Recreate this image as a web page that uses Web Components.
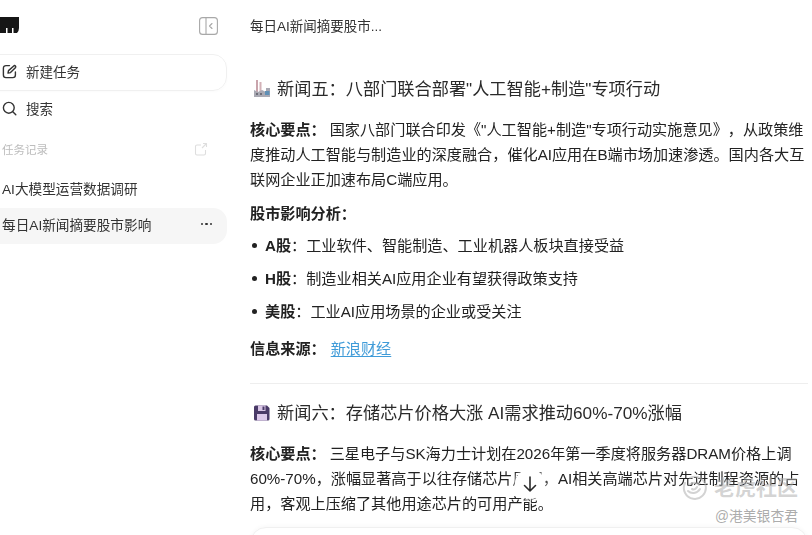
<!DOCTYPE html>
<html lang="zh">
<head>
<meta charset="utf-8">
<title>每日AI新闻摘要股市影响</title>
<style>
  html, body { margin:0; height:100%; overflow:hidden; background:#fff; }
  body { font-family:"Liberation Sans","Noto Sans CJK SC",sans-serif; color:#222; text-spacing-trim:space-all; }
</style>
</head>
<body>
<app-shell>
  <app-sidebar slot="side">
    <nav-row boxed label="新建任务">
      <svg slot="icon" width="15" height="15" viewBox="0 0 15 15" fill="none" stroke="#333" stroke-width="1.400" stroke-linecap="round" stroke-linejoin="round"><path d="M7.500 1.600H4a2.600 2.600 0 0 0-2.600 2.600V11A2.600 2.600 0 0 0 4 13.600h6.800a2.600 2.600 0 0 0 2.600-2.600V8"/><path d="M12.300 1.500a1.300 1.300 0 0 1 1.300 1.900L8.500 8.600 6 9.100l.5-2.500z"/></svg>
    </nav-row>
    <nav-row label="搜索">
      <svg slot="icon" width="15" height="15" viewBox="0 0 15 15" fill="none" stroke="#333" stroke-width="1.400" stroke-linecap="round"><circle cx="6.800" cy="6.800" r="5.400"/><path d="M10.800 10.800l3 3"/></svg>
    </nav-row>
    <history-head></history-head>
    <history-item>AI大模型运营数据调研</history-item>
    <history-item active>每日AI新闻摘要股市影响</history-item>
  </app-sidebar>
  <chat-view slot="main" title-text="每日AI新闻摘要股市...">
    <news-section>
      <svg slot="emoji" width="18" height="18" viewBox="0 0 18 18"><rect x="3" y="0" width="2" height="13" fill="#c9a4ac"/><rect x="6.500" y="2" width="2" height="11" fill="#d3b2b8"/><path d="M1 17V10l4 2 4-2 4 2V8h4v9z" fill="#a9a9b3"/><rect x="12" y="11" width="4.500" height="4" fill="#5f8fb5"/><rect x="3" y="13" width="2" height="2" fill="#6d6d78"/><rect x="7" y="13" width="2" height="2" fill="#6d6d78"/></svg>
      <span slot="title">新闻五：八部门联合部署"人工智能+制造"专项行动</span>
      <news-para label="核心要点：">国家八部门联合印发《"人工智能+制造"专项行动实施意见》，从政策维度推动人工智能与制造业的深度融合，催化AI应用在B端市场加速渗透。国内各大互联网企业正加速布局C端应用。</news-para>
      <impact-list heading="股市影响分析：">
        <impact-item market="A股">工业软件、智能制造、工业机器人板块直接受益</impact-item>
        <impact-item market="H股">制造业相关AI应用企业有望获得政策支持</impact-item>
        <impact-item market="美股">工业AI应用场景的企业或受关注</impact-item>
      </impact-list>
      <source-line name="新浪财经"></source-line>
    </news-section>
    <news-section ruled>
      <svg slot="emoji" width="18" height="18" viewBox="0 0 18 18"><path d="M2.500 1.500h11.500l2.500 2.500v11a1.500 1.500 0 0 1-1.500 1.500h-12.500a1.500 1.500 0 0 1-1.500-1.500v-12a1.500 1.500 0 0 1 1.500-1.500z" fill="#4a3a68"/><rect x="4" y="10" width="10" height="6.500" fill="#dcc8ea"/><rect x="5" y="1.500" width="7.500" height="5.500" fill="#d9c6e6"/><rect x="9.500" y="2.500" width="2" height="3.500" fill="#4a3a68"/></svg>
      <span slot="title">新闻六：存储芯片价格大涨 AI需求推动60%-70%涨幅</span>
      <news-para label="核心要点：">三星电子与SK海力士计划在2026年第一季度将服务器DRAM价格上调60%-70%，涨幅显著高于以往存储芯片周期，AI相关高端芯片对先进制程资源的占用，客观上压缩了其他用途芯片的可用产能。</news-para>
    </news-section>
    <composer-box></composer-box>
  </chat-view>
</app-shell>
<scroll-down></scroll-down>
<site-watermark></site-watermark>

<script>
// ===== SHELL =====
customElements.define('app-shell', class extends HTMLElement {
    connectedCallback() {
        this.attachShadow({ mode: 'open' });
        this.shadowRoot.innerHTML = `
            <style>
                :host { display:grid; grid-template-columns:250px 1fr; height:535px; overflow:hidden; filter:blur(.3px); }
            </style>
            <slot name="side"></slot>
            <slot name="main"></slot>
        `;
    }
});

// ===== SIDEBAR =====
customElements.define('app-sidebar', class extends HTMLElement {
    connectedCallback() {
        this.attachShadow({ mode: 'open' });
        this.shadowRoot.innerHTML = `
            <style>
                :host { display:block; margin-left:-14px; width:241px; padding-top:17px; }
                .top { display:flex; justify-content:space-between; align-items:flex-start; height:18px; margin-bottom:19px; padding-left:14px; padding-right:9px; }
                .top svg { display:block; }
            </style>
            <div class="top">
                <svg width="19" height="17" viewBox="0 0 19 17"><path d="M0 0h19v11q0 3-2 5h-3.500v-5H12v5H7.500v-5H6v5H0z" fill="#161616"/></svg>
                <svg width="19" height="18" viewBox="0 0 19 18" fill="none" stroke="#a8a8a8" stroke-width="1.100"><rect x=".6" y=".6" width="17.800" height="16.800" rx="3"/><path d="M7 1v16"/><path d="M13 6.500L10.500 9l2.500 2.500" stroke-linecap="round" stroke-linejoin="round"/></svg>
            </div>
            <slot></slot>
        `;
    }
});

customElements.define('nav-row', class extends HTMLElement {
    connectedCallback() {
        this.attachShadow({ mode: 'open' });
        this.shadowRoot.innerHTML = `
            <style>
                :host { display:flex; align-items:center; gap:9px; height:37px; padding:0 0 3px 15px; font-size:13.500px; color:#333; box-sizing:border-box; border:1px solid transparent; border-radius:14px; }
                :host([boxed]) { border-color:#f0f0f0; box-shadow:0 1px 3px rgba(0,0,0,.02); }
                ::slotted(svg) { display:block; flex:none; margin-top:1px; }
            </style>
            <slot name="icon"></slot><span>${this.getAttribute('label')}</span>
        `;
    }
});

customElements.define('history-head', class extends HTMLElement {
    connectedCallback() {
        this.attachShadow({ mode: 'open' });
        this.shadowRoot.innerHTML = `
            <style>
                :host { display:flex; justify-content:space-between; align-items:center; margin-top:9px; margin-bottom:11px; height:24px; padding-left:16px; padding-right:19px; font-size:11.500px; color:#bdbdbd; }
                svg { display:block; }
            </style>
            <span>任务记录</span>
            <svg width="14" height="14" viewBox="0 0 14 14" fill="none" stroke="#dedede" stroke-width="1.100" stroke-linejoin="round"><path d="M7 3H3a1.500 1.500 0 0 0-1.500 1.500v7A1.500 1.500 0 0 0 3 13h7a1.500 1.500 0 0 0 1.500-1.500V8"/><path d="M9 1.500h3.500V5M12.500 1.500L8 6"/></svg>
        `;
    }
});

customElements.define('history-item', class extends HTMLElement {
    connectedCallback() {
        this.attachShadow({ mode: 'open' });
        this.shadowRoot.innerHTML = `
            <style>
                :host { display:flex; align-items:center; justify-content:space-between; height:36px; padding:0 15px 4px 16px; box-sizing:border-box; border-radius:14px; font-size:13.650px; color:#333; }
                :host([active]) { background:#f6f6f6; }
                .more { display:none; gap:2px; }
                :host([active]) .more { display:flex; }
                .more i { width:2.500px; height:2.500px; border-radius:50%; background:#333; }
            </style>
            <span><slot></slot></span>
            <span class="more"><i></i><i></i><i></i></span>
        `;
    }
});

// ===== CHAT =====
customElements.define('chat-view', class extends HTMLElement {
    connectedCallback() {
        this.attachShadow({ mode: 'open' });
        this.shadowRoot.innerHTML = `
            <style>
                :host { display:block; padding-right:4px; min-width:0; }
                h1 { margin:0; font-size:13.500px; font-weight:400; line-height:20px; padding-top:17px; margin-bottom:41px; color:#333; }
            </style>
            <h1>${this.getAttribute('title-text')}</h1>
            <slot></slot>
        `;
    }
});

customElements.define('news-section', class extends HTMLElement {
    connectedCallback() {
        this.attachShadow({ mode: 'open' });
        this.shadowRoot.innerHTML = `
            <style>
                :host { display:block; }
                :host([ruled]) { border-top:1px solid #eee; margin-top:22px; padding-top:18px; }
                h2 { display:flex; align-items:center; gap:6px; margin:0 0 17px; padding-left:3px; font-size:17.200px; font-weight:400; line-height:22px; color:#2a2a2a; }
                ::slotted(svg) { display:block; flex:none; }
            </style>
            <h2><slot name="emoji"></slot><slot name="title"></slot></h2>
            <slot></slot>
        `;
    }
});

customElements.define('news-para', class extends HTMLElement {
    connectedCallback() {
        this.attachShadow({ mode: 'open' });
        this.shadowRoot.innerHTML = `
            <style>
                :host { display:block; font-size:15.150px; line-height:25px; }
                b { font-weight:700; margin-right:4px; }
            </style>
            <b>${this.getAttribute('label')}</b><slot></slot>
        `;
    }
});

customElements.define('impact-list', class extends HTMLElement {
    connectedCallback() {
        this.attachShadow({ mode: 'open' });
        this.shadowRoot.innerHTML = `
            <style>
                :host { display:block; margin-top:9px; font-size:15.150px; line-height:25px; }
                b { display:block; margin-bottom:7px; }
                .items { display:flex; flex-direction:column; gap:8px; }
            </style>
            <b>${this.getAttribute('heading')}</b>
            <div class="items"><slot></slot></div>
        `;
    }
});

customElements.define('impact-item', class extends HTMLElement {
    connectedCallback() {
        this.attachShadow({ mode: 'open' });
        this.shadowRoot.innerHTML = `
            <style>
                :host { display:flex; align-items:center; font-size:15.150px; line-height:25px; }
                i { width:5px; height:5px; border-radius:50%; background:#222; margin:0 8px 0 2px; flex:none; }
                b { font-weight:700; }
            </style>
            <i></i><b>${this.getAttribute('market')}</b><span>：</span><span><slot></slot></span>
        `;
    }
});

customElements.define('source-line', class extends HTMLElement {
    connectedCallback() {
        this.attachShadow({ mode: 'open' });
        this.shadowRoot.innerHTML = `
            <style>
                :host { display:block; margin-top:12px; font-size:15.150px; line-height:25px; }
                b { margin-right:5px; }
                a { color:#3f9bd8; text-decoration:underline; text-underline-offset:2px; }
            </style>
            <b>信息来源：</b><a href="#">${this.getAttribute('name')}</a>
        `;
    }
});

customElements.define('composer-box', class extends HTMLElement {
    connectedCallback() {
        this.attachShadow({ mode: 'open' });
        this.shadowRoot.innerHTML = `
            <style>
                :host { display:block; height:60px; margin-top:11px; border:1px solid #f0f0f0; border-radius:16px; box-shadow:0 -1px 4px rgba(0,0,0,.03); background:#fff; }
            </style>
        `;
    }
});

// ===== OVERLAYS =====
customElements.define('scroll-down', class extends HTMLElement {
    connectedCallback() {
        this.attachShadow({ mode: 'open' });
        this.shadowRoot.innerHTML = `
            <style>
                :host { position:absolute; left:515px; top:469px; width:30px; height:30px; border-radius:50%; background:#fff; box-shadow:0 0 4px rgba(255,255,255,.9); display:flex; align-items:center; justify-content:center; }
                svg { display:block; }
            </style>
            <svg width="16" height="18" viewBox="0 0 16 18" fill="none" stroke="#2a2a2a" stroke-width="1.600" stroke-linecap="round" stroke-linejoin="round"><path d="M8 2v14M2.500 10.500L8 16l5.500-5.500"/></svg>
        `;
    }
});

customElements.define('site-watermark', class extends HTMLElement {
    connectedCallback() {
        this.attachShadow({ mode: 'open' });
        this.shadowRoot.innerHTML = `
            <style>
                :host { position:absolute; right:14px; top:474px; display:flex; flex-direction:column; align-items:flex-end; gap:6px; color:rgba(175,175,175,.55); pointer-events:none; }
                .brand { display:flex; align-items:center; gap:7px; font-size:21px; line-height:28px; font-weight:700; }
                .at { font-size:13.800px; line-height:18px; color:rgba(150,150,150,.8); }
                svg { display:block; }
            </style>
            <div class="brand">
                <svg width="26" height="26" viewBox="0 0 26 26" fill="none" stroke="rgba(175,175,175,.55)" stroke-width="2" stroke-linecap="round"><path d="M4 8a11 11 0 1 0 5-5"/><path d="M7 16c3 3 9 3 12-2M8 10c3-3 8-3 10 0M11 14c2 1 4 0 5-2"/></svg>
                <span>老虎社区</span>
            </div>
            <div class="at">@港美银杏君</div>
        `;
    }
});
</script>
</body>
</html>
